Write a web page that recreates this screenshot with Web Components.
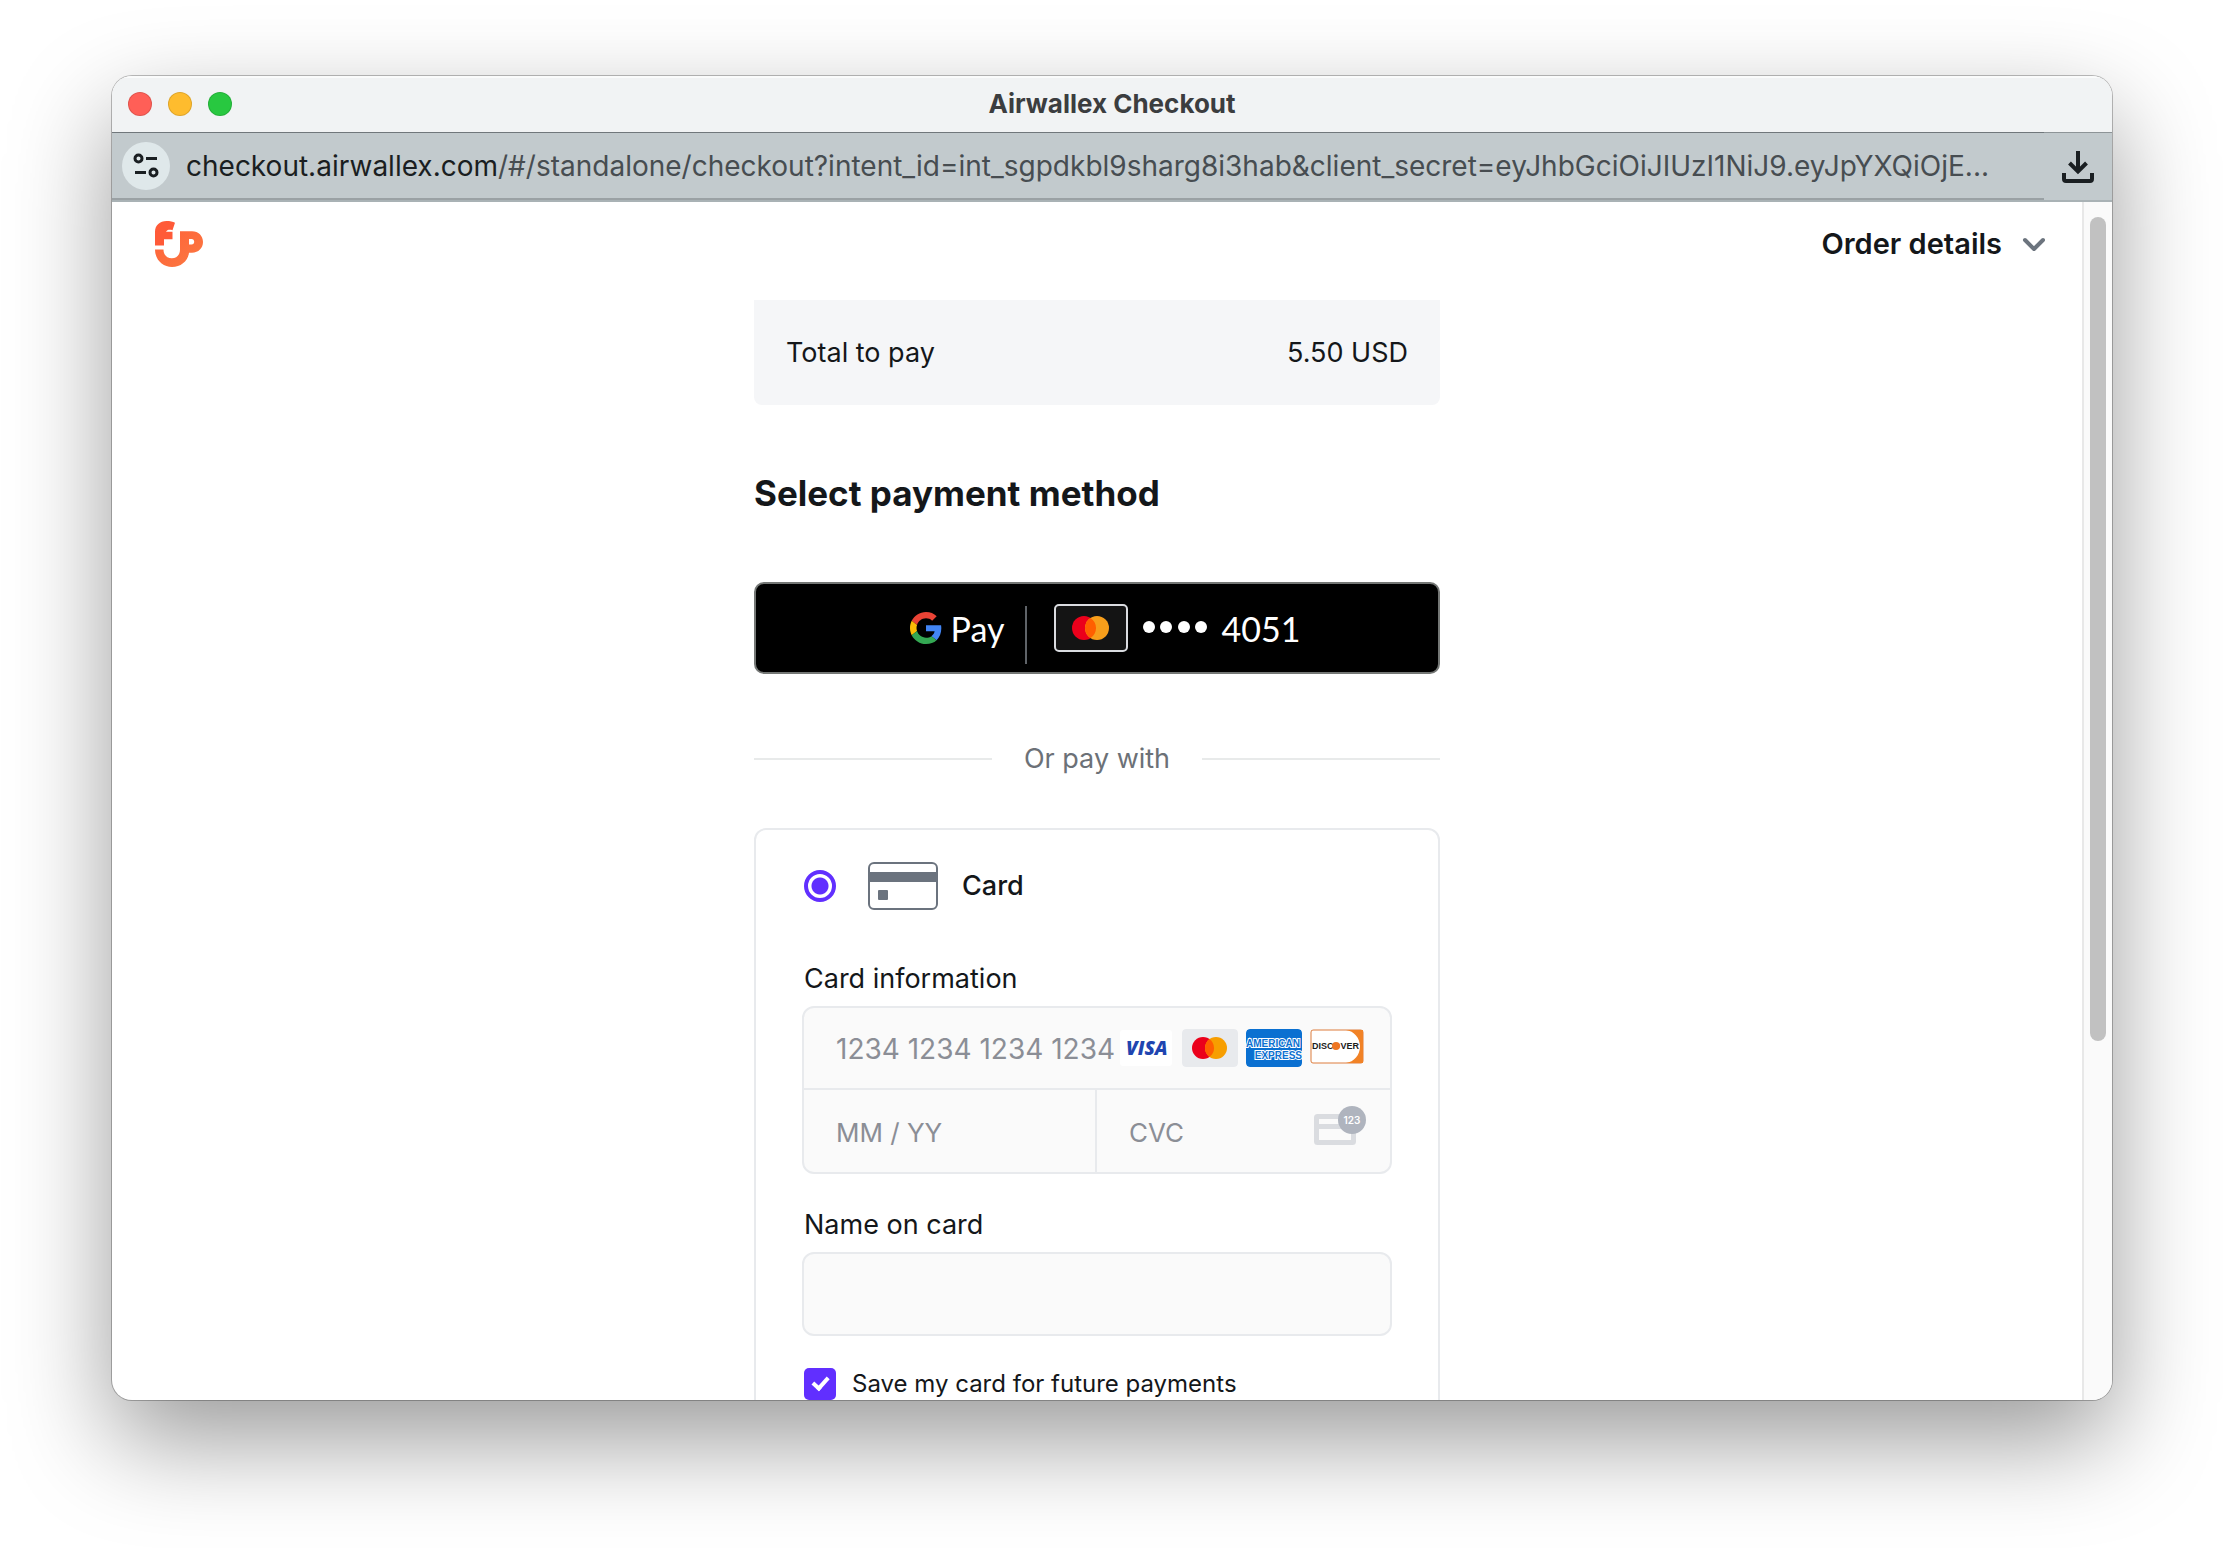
<!DOCTYPE html>
<html lang="en">
<head>
<meta charset="utf-8">
<title>Airwallex Checkout</title>
<style>
html, body {
  height: 100%;
}
body {
  margin: 0;
  box-sizing: border-box;
  padding: 76px 112px 148px;
  background-color: #ffffff;
  color: #14171a;
  font-family: Inter, "Liberation Sans", sans-serif;
  font-size: 27px;
  line-height: 36px;
  overflow: hidden;
}
</style>
</head>
<body>
<browser-window>
  <title-bar slot="chrome">Airwallex Checkout</title-bar>
  <address-bar slot="chrome" host="checkout.airwallex.com" path="/#/standalone/checkout?intent_id=int_sgpdkbl9sharg8i3hab&amp;client_secret=eyJhbGciOiJIUzI1NiJ9.eyJpYXQiOjE..."></address-bar>
  <checkout-page>
    <checkout-header slot="header"></checkout-header>
    <order-total amount="5.50 USD">Total to pay</order-total>
    <section-title>Select payment method</section-title>
    <google-pay-button digits="4051"></google-pay-button>
    <text-divider>Or pay with</text-divider>
    <card-panel></card-panel>
  </checkout-page>
</browser-window>

<script>
function define(name, html, setup) {
  const template = document.createElement("template");
  template.innerHTML = html;
  customElements.define(name, class extends HTMLElement {
    constructor() {
      super();
      this.attachShadow({ mode: "open" }).appendChild(template.content.cloneNode(true));
    }
    connectedCallback() {
      if (setup) setup(this, this.shadowRoot);
    }
  });
}

define("browser-window", `
 <style>
:host {
  display: flex;
  flex-direction: column;
  height: 100%;
  border-radius: 20px;
  overflow: hidden;
  background-color: #ffffff;
  box-shadow: 0 0 0 1px rgba(0, 0, 0, 0.25), 0 40px 100px rgba(0, 0, 0, 0.4);
}
.view {
  flex: 1;
  min-height: 0;
  display: flex;
}
::slotted(checkout-page) {
  flex: 1;
  min-width: 0;
}
.track {
  box-sizing: border-box;
  width: 30px;
  padding: 15px 6px;
  border-left: 2px solid #e8e8e8;
  background-color: #fafafa;
}
.thumb {
  height: 824px;
  max-height: 100%;
  border-radius: 8px;
  background-color: #c1c1c1;
}
 </style>
 <slot name="chrome"></slot>
 <div class="view">
   <slot></slot>
   <div class="track"><div class="thumb"></div></div>
 </div>
`);

define("title-bar", `
 <style>
:host {
  display: grid;
  grid-template-columns: 1fr auto 1fr;
  align-items: center;
  height: 56px;
  padding: 0 16px;
  background-color: #f1f3f4;
  box-shadow: inset 0 2px #fafbfb;
  color: #3b3d3f;
  font-size: 26px;
  font-weight: 700;
}
.lights {
  display: flex;
  gap: 16px;
}
button {
  width: 24px;
  height: 24px;
  padding: 0;
  border: 1px solid rgba(0, 0, 0, 0.12);
  border-radius: 50%;
}
.close { background-color: #ff5f57; }
.minimise { background-color: #febc2e; }
.zoom { background-color: #28c840; }
 </style>
 <div class="lights">
   <button class="close" aria-label="Close"></button>
   <button class="minimise" aria-label="Minimise"></button>
   <button class="zoom" aria-label="Zoom"></button>
 </div>
 <slot></slot>
`);

define("address-bar", `
 <style>
:host {
  display: flex;
  height: 70px;
  box-sizing: border-box;
  border-bottom: 2px solid #a9b2b5;
  background-color: #c2cacd;
  font-size: 28px;
}
.location {
  flex: 1;
  min-width: 0;
  display: flex;
  align-items: center;
  gap: 16px;
  padding-left: 10px;
  border-top: 1px solid #70777b;
  border-bottom: 2px solid #9aa1a4;
}
.side {
  width: 68px;
  display: flex;
  align-items: center;
  justify-content: center;
  border-top: 1px solid #8d9497;
}
button {
  display: flex;
  align-items: center;
  justify-content: center;
  flex: none;
  padding: 0;
  border: 0;
  background: none;
  color: #1a1f22;
}
.info {
  width: 48px;
  height: 48px;
  border-radius: 50%;
  background-color: #dfe8ea;
}
.url {
  white-space: nowrap;
  color: #474d51;
}
.host {
  color: #1a1e21;
}
 </style>
 <div class="location">
   <button class="info" aria-label="View site information">
     <svg width="28" height="28" viewBox="0 0 28 28" fill="none" stroke="currentColor" stroke-width="3">
       <circle cx="6.500" cy="6.500" r="3.500"/><path d="M14 6.500h11M3 20.500h11"/><circle cx="21.500" cy="20.500" r="3.500"/>
     </svg>
   </button>
   <span class="url"><span class="host"></span><span class="path"></span></span>
 </div>
 <div class="side">
   <button aria-label="Downloads">
     <svg width="34" height="34" viewBox="0 0 34 34" fill="none" stroke="currentColor" stroke-width="4">
       <path d="M17 1v20M8.500 13l8.500 8.500 8.500-8.500"/><path d="M3 23v6q0 2 2 2h24q2 0 2-2v-6"/>
     </svg>
   </button>
 </div>
`, (host, root) => {
  root.querySelector(".host").textContent = host.getAttribute("host");
  root.querySelector(".path").textContent = host.getAttribute("path");
});

define("checkout-page", `
 <style>
:host {
  display: flex;
  flex-direction: column;
  overflow: hidden;
}
main {
  flex: 1;
  min-height: 0;
  width: 100%;
  max-width: 686px;
  margin: 0 auto;
}
 </style>
 <slot name="header"></slot>
 <main><slot></slot></main>
`);

define("checkout-header", `
 <style>
:host {
  display: flex;
  justify-content: space-between;
  align-items: center;
  padding: 18px 36px 32px 42px;
}
button {
  display: flex;
  align-items: center;
  gap: 20px;
  padding: 0;
  border: 0;
  background: none;
  color: #14171a;
  font: inherit;
  font-size: 29px;
  font-weight: 600;
}
 </style>
 <svg width="50" height="48" viewBox="0 -1 50 48" role="img" aria-label="Merchant">
   <defs>
     <linearGradient id="flame" x1="0" y1="0" x2="1" y2="1">
       <stop offset="0" stop-color="#ff6038"/><stop offset="1" stop-color="#fb7a42"/>
     </linearGradient>
   </defs>
   <path fill="#ff5a38" d="M1 24.500V11C1 4 6 0 12.500 0c3.500 0 6.500.6 8.500 1.800L18.500 9.200c-2.800-.9-5.600-.6-6.500 1.600h6.500v7.400H10v6.300z"/>
   <path fill="url(#flame)" fill-rule="evenodd" d="M1 28.500h8.500c0 5.500 3.500 8.800 8.300 8.800s8.200-3.300 8.200-8.800V10.300h12c6.500 0 11 4.700 11 10.700s-4.500 10.700-11 10.700h-3C34 40 27 46 18 46S1 39 1 28.500zM35 18v5.500h2.500c3.600 0 3.600-5.500 0-5.500z"/>
 </svg>
 <button aria-expanded="false">Order details
   <svg width="24" height="24" viewBox="0 0 24 24" fill="none" stroke="#6c747e" stroke-width="4" stroke-linecap="round" stroke-linejoin="round"><path d="M3 8l9 9 9-9"/></svg>
 </button>
`);

define("order-total", `
 <style>
:host {
  display: flex;
  justify-content: space-between;
  padding: 35px 32px 34px;
  border-radius: 0 0 8px 8px;
  background-color: #f5f6f8;
}
 </style>
 <slot></slot>
 <span class="amount"></span>
`, (host, root) => {
  root.querySelector(".amount").textContent = host.getAttribute("amount");
});

define("section-title", `
 <style>
:host {
  display: block;
  margin: 66px 0 67px;
}
h1 {
  margin: 0;
  font-size: 35px;
  font-weight: 700;
  line-height: 44px;
}
 </style>
 <h1><slot></slot></h1>
`);

define("google-pay-button", `
 <style>
:host {
  display: block;
}
button {
  display: flex;
  align-items: center;
  justify-content: center;
  box-sizing: border-box;
  width: 100%;
  height: 92px;
  padding: 0 0 0 16px;
  border: 2px solid #747775;
  border-radius: 10px;
  background-color: #000000;
  color: #ffffff;
  font-family: Lato, "Open Sans", sans-serif;
  font-size: 34px;
}
.brand, .saved {
  display: flex;
  align-items: center;
}
.brand {
  gap: 9px;
  padding-right: 20px;
}
.rule {
  width: 2px;
  height: 58px;
  margin-top: 14px;
  background-color: #5f6368;
}
.saved {
  gap: 15px;
  padding-left: 27px;
}
 </style>
 <button aria-label="Pay with Google Pay">
   <span class="brand">
     <svg width="32" height="32" viewBox="0 0 48 48">
       <path fill="#ea4335" d="M24 9.500c3.540 0 6.710 1.220 9.210 3.600l6.850-6.850C35.900 2.380 30.470 0 24 0 14.620 0 6.510 5.380 2.560 13.220l7.980 6.190C12.430 13.720 17.740 9.500 24 9.500z"/>
       <path fill="#4285f4" d="M46.980 24.550c0-1.570-.15-3.090-.38-4.550H24v9.020h12.940c-.58 2.960-2.260 5.480-4.780 7.180l7.730 6c4.510-4.180 7.090-10.360 7.090-17.650z"/>
       <path fill="#fbbc05" d="M10.530 28.590c-.48-1.450-.76-2.990-.76-4.590s.27-3.140.76-4.590l-7.980-6.190C.92 16.460 0 20.120 0 24s.92 7.540 2.560 10.780l7.970-6.190z"/>
       <path fill="#34a853" d="M24 48c6.480 0 11.930-2.130 15.890-5.810l-7.730-6c-2.150 1.450-4.920 2.300-8.160 2.300-6.260 0-11.570-4.220-13.470-9.910l-7.980 6.190C6.510 42.620 14.620 48 24 48z"/>
     </svg>
     <span>Pay</span>
   </span>
   <span class="rule"></span>
   <span class="saved">
     <svg width="74" height="48" viewBox="0 0 74 48">
       <rect x="1" y="1" width="72" height="46" rx="4" fill="#141414" stroke="#dadce0" stroke-width="2"/>
       <circle cx="30" cy="24" r="12" fill="#eb001b"/><circle cx="43" cy="24" r="12" fill="#f79e1b"/>
       <path fill="#ff5f00" d="M36.500 13.900a12 12 0 0 1 0 20.200 12 12 0 0 1 0-20.200z"/>
     </svg>
     <svg width="64" height="14" viewBox="0 0 64 14" fill="#ffffff">
       <circle cx="6" cy="6" r="6"/><circle cx="23" cy="6" r="6"/><circle cx="41" cy="6" r="6"/><circle cx="58" cy="6" r="6"/>
     </svg>
     <span class="digits"></span>
   </span>
 </button>
`, (host, root) => {
  root.querySelector(".digits").textContent = host.getAttribute("digits");
});

define("text-divider", `
 <style>
:host {
  display: flex;
  align-items: center;
  gap: 32px;
  margin: 67px 0 51px;
  color: #6c7177;
}
:host::before, :host::after {
  content: "";
  flex: 1;
  height: 2px;
  background-color: #e8eaea;
}
 </style>
 <slot></slot>
`);

define("card-brands", `
 <style>
:host {
  display: flex;
  gap: 8px;
  flex: none;
}
svg {
  display: block;
  border-radius: 4px;
}
 </style>
 <svg width="54" height="38" viewBox="0 0 54 38" role="img" aria-label="Visa">
   <rect y="1" width="52" height="36" rx="3" fill="#ffffff"/>
   <text x="6" y="26" font-family="Open Sans, sans-serif" font-size="19" font-weight="800" font-style="italic" fill="#1f45b0">VISA</text>
 </svg>
 <svg width="56" height="38" viewBox="0 0 56 38" role="img" aria-label="Mastercard">
   <rect width="56" height="38" rx="4" fill="#e8eaed"/>
   <circle cx="21" cy="19" r="11" fill="#eb001b"/><circle cx="34" cy="19" r="11" fill="#f79e00"/>
   <path fill="#ff5f00" d="M27.500 10.100a11 11 0 0 1 0 17.800 11 11 0 0 1 0-17.800z"/>
 </svg>
 <svg width="56" height="38" viewBox="0 0 56 38" role="img" aria-label="American Express">
   <rect width="56" height="38" rx="4" fill="#0a70d1"/>
   <g font-family="Liberation Sans, sans-serif" font-size="10" font-weight="700" fill="#0a70d1" stroke="#ffffff" stroke-width="2" paint-order="stroke">
     <text x="0" y="18">AMERICAN</text><text x="56" y="30" text-anchor="end">EXPRESS</text>
   </g>
 </svg>
 <svg width="54" height="38" viewBox="0 0 54 38" role="img" aria-label="Discover">
   <rect x="1" y="1" width="52" height="33" rx="2" fill="#ffffff" stroke="#dd7c3c"/>
   <path fill="#f18226" d="M36 1h17v33H36c8-1 14-8 14-16.500S44 2 36 1z"/>
   <g font-family="Liberation Sans, sans-serif" font-size="9" font-weight="700" fill="#1c1c1c">
     <text x="2" y="20">DISC<tspan fill="#ee7623">O</tspan>VER</text>
   </g>
   <circle cx="26" cy="17" r="4" fill="#ee7623"/>
 </svg>
`);

define("card-panel", `
 <style>
:host {
  display: block;
  padding: 32px 46px;
  border: 2px solid #e8eaed;
  border-radius: 12px;
}
.method {
  display: flex;
  align-items: center;
  height: 48px;
  padding-left: 2px;
  margin-bottom: 51px;
}
.method label {
  display: flex;
  align-items: center;
  gap: 24px;
  padding-left: 32px;
  font-weight: 500;
}
input {
  box-sizing: border-box;
  margin: 0;
  font: inherit;
  color: inherit;
}
input[type="radio"] {
  appearance: none;
  flex: none;
  width: 32px;
  height: 32px;
  border: 4px solid #612fff;
  border-radius: 50%;
  background: radial-gradient(circle, #612fff 8px, #ffffff 9px);
}
.label {
  display: block;
  padding-left: 2px;
  margin-bottom: 9px;
}
.group {
  margin-bottom: 33px;
  border: 2px solid #e8eaed;
  border-radius: 12px;
  background-color: #fafafa;
}
.number, .expiry, .cvc {
  display: flex;
  align-items: center;
  height: 80px;
}
.number {
  padding-right: 26px;
  border-bottom: 2px solid #e8eaed;
  font-size: 28px;
}
.pair {
  display: grid;
  grid-template-columns: 1fr 1fr;
  font-size: 26px;
}
.pair > div {
  height: 82px;
}
.expiry {
  border-right: 2px solid #e8eaed;
}
.cvc {
  padding-right: 24px;
}
.group input {
  flex: 1;
  min-width: 0;
  width: 100%;
  height: 100%;
  padding: 2px 0 0 32px;
  border: 0;
  background: none;
}
.group input::placeholder {
  color: #8b8e96;
  opacity: 1;
}
.name {
  display: block;
  width: 100%;
  height: 84px;
  padding: 0 32px;
  margin-bottom: 32px;
  border: 2px solid #e8eaed;
  border-radius: 12px;
  background-color: #fafafa;
}
.save {
  display: flex;
  align-items: center;
  gap: 16px;
  height: 32px;
  padding-left: 2px;
  font-size: 24px;
}
input[type="checkbox"] {
  appearance: none;
  display: grid;
  place-items: center;
  flex: none;
  width: 32px;
  height: 32px;
  border-radius: 5px;
  background-color: #612fff;
}
input[type="checkbox"]::before {
  content: "";
  box-sizing: border-box;
  width: 10px;
  height: 16px;
  border: solid #ffffff;
  border-width: 0 4px 4px 0;
  transform: rotate(42deg) translate(-1px, -2px);
}
 </style>
 <div class="method">
   <input type="radio" id="card" name="method" checked>
   <label for="card">
     <svg width="70" height="48" viewBox="0 0 70 48">
       <rect x="1" y="1" width="68" height="46" rx="5" fill="#ffffff" stroke="#6b737e" stroke-width="2"/>
       <path fill="#6b737e" d="M1 10h68v10H1z"/><rect x="10" y="28" width="10" height="10" rx="1" fill="#6b737e"/>
     </svg>
     Card
   </label>
 </div>
 <label class="label" for="number">Card information</label>
 <div class="group">
   <div class="number">
     <input id="number" inputmode="numeric" placeholder="1234 1234 1234 1234">
     <card-brands></card-brands>
   </div>
   <div class="pair">
     <div class="expiry"><input aria-label="Expiry date" placeholder="MM / YY"></div>
     <div class="cvc">
       <input aria-label="CVC" placeholder="CVC">
       <svg width="54" height="54" viewBox="0 0 54 54">
         <rect x="4.500" y="12.500" width="37" height="26" rx="1" fill="none" stroke="#dadce0" stroke-width="5"/><path fill="#dadce0" d="M4 20h38v5H4z"/>
         <circle cx="40" cy="16" r="14" fill="#afb4be"/>
         <text x="40" y="20" text-anchor="middle" font-family="Inter, sans-serif" font-size="10" font-weight="600" fill="#ffffff">123</text>
       </svg>
     </div>
   </div>
 </div>
 <label class="label" for="name">Name on card</label>
 <input class="name" id="name" autocomplete="cc-name">
 <div class="save">
   <input type="checkbox" id="save" checked>
   <label for="save">Save my card for future payments</label>
 </div>
`);
</script>
</body>
</html>
